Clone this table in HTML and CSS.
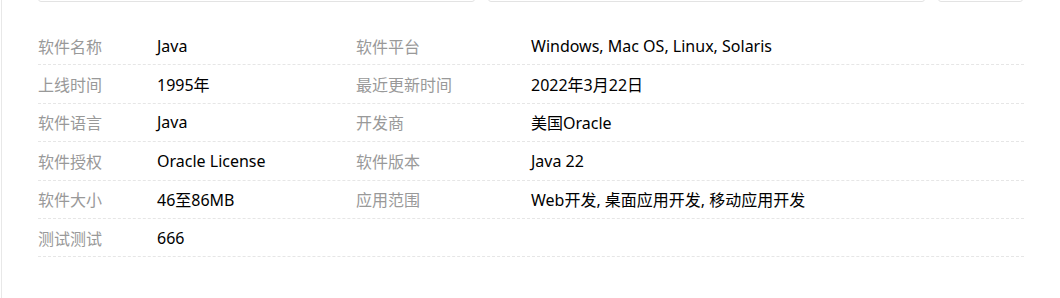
FILE: index.html
```html
<!DOCTYPE html>
<html lang="zh-CN">

<head>
    <meta charset="UTF-8">
    <meta name="viewport" content="width=device-width, initial-scale=1.0">
    <title>软件信息</title>
    <link rel="stylesheet" href="styles.css">
</head>

<body>
    <div class="page">
        <div class="tabs">
            <div class="tab"></div>
            <div class="tab"></div>
            <div class="tab tab-small"></div>
        </div>
        <div class="info">
            <div class="row">
                <div class="label">软件名称</div>
                <div class="value">Java</div>
                <div class="label">软件平台</div>
                <div class="value">Windows, Mac OS, Linux, Solaris</div>
            </div>
            <div class="row">
                <div class="label">上线时间</div>
                <div class="value">1995年</div>
                <div class="label">最近更新时间</div>
                <div class="value">2022年3月22日</div>
            </div>
            <div class="row">
                <div class="label">软件语言</div>
                <div class="value">Java</div>
                <div class="label">开发商</div>
                <div class="value">美国Oracle</div>
            </div>
            <div class="row">
                <div class="label">软件授权</div>
                <div class="value">Oracle License</div>
                <div class="label">软件版本</div>
                <div class="value">Java 22</div>
            </div>
            <div class="row">
                <div class="label">软件大小</div>
                <div class="value">46至86MB</div>
                <div class="label">应用范围</div>
                <div class="value">Web开发, 桌面应用开发, 移动应用开发</div>
            </div>
            <div class="row">
                <div class="label">测试测试</div>
                <div class="value">666</div>
                <div class="label"></div>
                <div class="value"></div>
            </div>
        </div>
    </div>
</body>

</html>
```

FILE: styles.css
```css
body{
    margin: 0;
    padding: 0;
    background-color: #fff;
    font-family: 'Segoe UI', 'Noto Sans', 'Noto Sans CJK SC', sans-serif;
}
* {
    box-sizing: border-box;
}
.page{
    height: 100vh;
    margin-left: 1px;
    border-left: 1px solid #e8e8e8;
    padding-left: 36px;
    width: 1023px;
    overflow: hidden;
}

/* cards above, only their bottom edge shows */
.tabs{
    display: flex;
    gap: 13px;
    margin-top: -38px;
}
.tab{
    width: 437px;
    height: 40px;
    border: 1px solid #e3e3e3;
    border-radius: 3px;
}
.tab-small{
    width: 85px;
}

.info{
    margin-top: 25px;
}
.row{
    display: grid;
    grid-template-columns: 119px 199px 175px 1fr;
    height: 38.4px;
    align-items: center;
    border-bottom: 1px dashed #e6e6e6;
    font-size: 16px;
}
.label{
    color: #999;
}
.value{
    color: #000;
}
```
